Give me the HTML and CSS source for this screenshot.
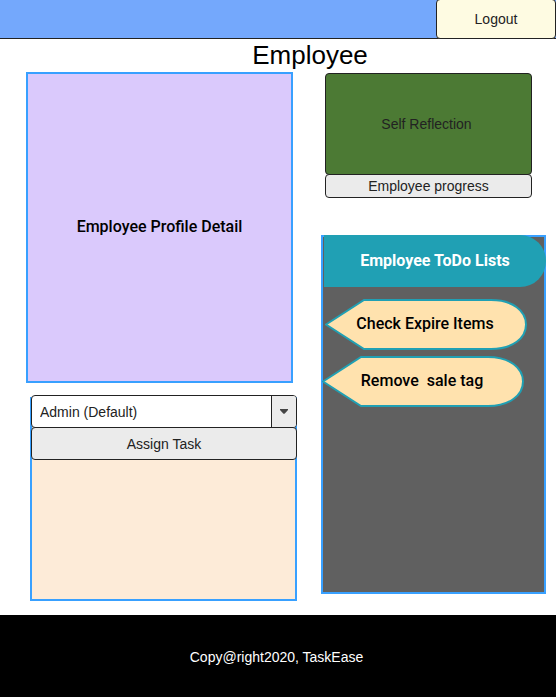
FILE: index.html
```html
<!DOCTYPE html>
<html lang="en">
<head>
<meta charset="utf-8">
<title>TaskEase - Employee</title>
<link rel="stylesheet" href="styles.css">
</head>
<body>
<header class="topbar">
  <button class="button logout" type="button">Logout</button>
</header>
<main class="main">
  <h1 class="title">Employee</h1>
  <div class="columns">
    <div class="column">
      <section class="profile">
        <h2 class="label">Employee Profile Detail</h2>
      </section>
      <section class="assign">
        <div class="picker">
          <select class="select" aria-label="Role">
            <option>Admin (Default)</option>
          </select>
          <span class="arrow">
            <svg width="8" height="5" viewBox="0 0 8 5"><path d="M0 0H8V1L4.800 4.500Q4 5 3.200 4.500L0 1Z" fill="#444"/></svg>
          </span>
        </div>
        <button class="button assign-button" type="button">Assign Task</button>
      </section>
    </div>
    <div class="column">
      <div class="actions">
        <button class="button reflection" type="button">Self Reflection</button>
        <button class="button progress" type="button">Employee progress</button>
      </div>
      <section class="todo">
        <h2 class="label todo-title">Employee ToDo Lists</h2>
        <ul class="tags">
          <li class="tag tag-inset">
            <svg class="tag-shape" viewBox="0 0 202 51" preserveAspectRatio="none"><path d="M1 25.500L39 1H166C188 1 201 12 201 25.500S188 50 166 50H39Z"/></svg>
            <span class="label">Check Expire Items</span>
          </li>
          <li class="tag">
            <svg class="tag-shape" viewBox="0 0 202 51" preserveAspectRatio="none"><path d="M1 25.500L39 1H166C188 1 201 12 201 25.500S188 50 166 50H39Z"/></svg>
            <span class="label">Remove  sale tag</span>
          </li>
        </ul>
      </section>
    </div>
  </div>
</main>
<footer class="footer">Copy@right2020, TaskEase</footer>
</body>
</html>
```
FILE: styles.css
```css
* {
  box-sizing: border-box;
}

body {
  margin: 0;
  min-height: 100vh;
  display: flex;
  flex-direction: column;
  background: #fff;
  color: #000;
  font: 14px/20px "Liberation Sans", Arial, sans-serif;
}

.topbar {
  display: flex;
  justify-content: flex-end;
  background: #74a8fc;
  border-bottom: 1px solid #222;
}

.button {
  display: block;
  padding: 0;
  border: 1px solid #222;
  border-radius: 4px;
  background: #ebebeb;
  color: #222;
  font: inherit;
}

.logout {
  width: 120px;
  height: 40px;
  margin: -1px 0;
  background: #fefbe2;
}

.main {
  flex: 1;
  padding: 0 10px 14px 26px;
}

.title {
  margin: 0;
  padding-left: 48px;
  font-size: 26px;
  line-height: 33px;
  font-weight: 400;
  text-align: center;
}

.columns {
  display: grid;
  grid-template-columns: 271fr 225fr;
  gap: 24px;
}

.column {
  display: flex;
  flex-direction: column;
}

.label {
  margin: 0;
  font: 500 16px/20px Roboto, sans-serif;
  white-space: pre;
}

.profile {
  display: flex;
  align-items: center;
  justify-content: center;
  min-height: 311px;
  margin-right: 4px;
  padding-bottom: 2px;
  background: #dac9fc;
  border: 2px solid #38a0ff;
}

.assign {
  min-height: 204px;
  margin: 14px 0 0 4px;
  background: #fdebd8;
  border: 2px solid #38a0ff;
}

.picker {
  position: relative;
  margin: -4px -2px 0 -1px;
}

.select {
  display: block;
  width: 100%;
  height: 33px;
  padding: 0 32px 0 8px;
  appearance: none;
  background: #fff;
  border: 1px solid #222;
  border-radius: 4px;
  color: #222;
  font: inherit;
}

.arrow {
  position: absolute;
  top: 1px;
  right: 1px;
  bottom: 1px;
  width: 25px;
  display: flex;
  align-items: center;
  justify-content: center;
  background: #ebebeb;
  border-left: 1px solid #222;
  border-radius: 0 3px 3px 0;
  pointer-events: none;
}

.assign-button {
  position: relative;
  width: calc(100% + 3px);
  height: 33px;
  margin: -1px -2px 0 -1px;
}

.actions {
  margin: 1px 14px 0 4px;
}

.reflection {
  width: 100%;
  height: 102px;
  padding-right: 4px;
  background: #4c7a34;
}

.progress {
  width: 100%;
  height: 24px;
  margin-top: -1px;
}

.todo {
  min-height: 359px;
  margin-top: 37px;
  background: #606060;
  border: 2px solid #38a0ff;
}

.todo-title {
  margin: -2px -2px 0 1px;
  background: #20a0b4;
  border-radius: 0 26px 26px 0;
  color: #fff;
  font-weight: 700;
  line-height: 52px;
  text-align: center;
}

.tags {
  display: grid;
  gap: 6px;
  margin: 12px 20px 0 -1px;
  padding: 0;
  list-style: none;
}

.tag {
  position: relative;
  display: flex;
  align-items: center;
  justify-content: center;
  height: 51px;
  padding: 0 2px 2px 0;
}

.tag-inset {
  margin: 0 -3px 0 3px;
}

.tag-shape {
  position: absolute;
  inset: 0;
  width: 100%;
  height: 100%;
  fill: #ffe2ae;
  stroke: #20a0b4;
  stroke-width: 2;
}

.tag .label {
  position: relative;
}

.footer {
  padding: 32px 3px 30px 0;
  background: #000;
  color: #fff;
  text-align: center;
}
```
